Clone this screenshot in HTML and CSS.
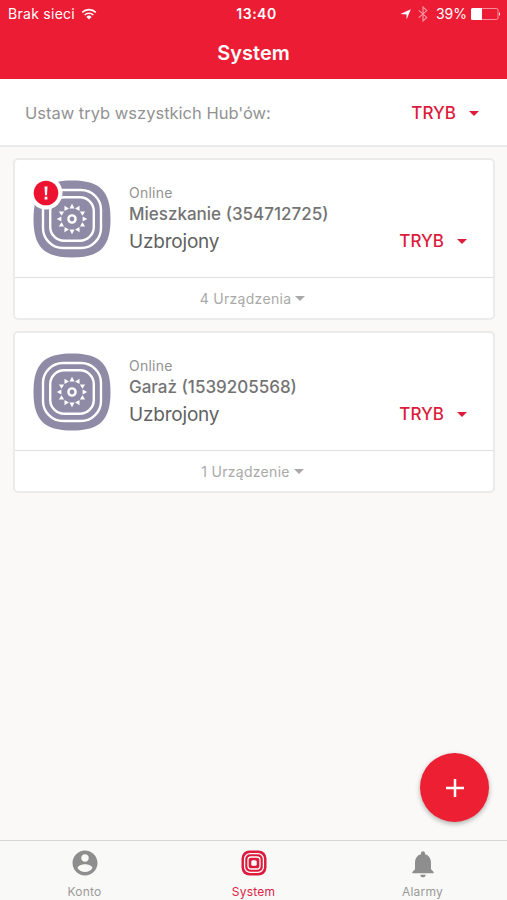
FILE: index.html
```html
<!DOCTYPE html>
<html lang="pl">
<head>
    <meta charset="UTF-8">
    <meta name="viewport" content="width=device-width, initial-scale=1">
    <title>System</title>
    <link rel="stylesheet" href="styles.css">
</head>
<body>
    <!-- hub icon, used by both cards -->
    <svg class="sprite" aria-hidden="true">
        <symbol id="hub" viewBox="-39 -39 78 78">
            <path fill="#8f8ba6" d="M0-38.5C28-38.5 38.5-28 38.5 0S28 38.5 0 38.5-38.5 28-38.5 0-28-38.5 0-38.5z"/>
            <rect x="-29" y="-29" width="58" height="58" rx="20" fill="none" stroke="#fff" stroke-width="2.4"/>
            <rect x="-21.8" y="-21.8" width="43.6" height="43.6" rx="14" fill="none" stroke="#fff" stroke-width="2.4"/>
            <circle r="3.6" fill="none" stroke="#fff" stroke-width="2.4"/>
            <g fill="#fff">
                <path id="ray" d="M0-15.2L2.5-10.6H-2.5z"/>
                <use href="#ray" transform="rotate(30)"/>
                <use href="#ray" transform="rotate(60)"/>
                <use href="#ray" transform="rotate(90)"/>
                <use href="#ray" transform="rotate(120)"/>
                <use href="#ray" transform="rotate(150)"/>
                <use href="#ray" transform="rotate(180)"/>
                <use href="#ray" transform="rotate(210)"/>
                <use href="#ray" transform="rotate(240)"/>
                <use href="#ray" transform="rotate(270)"/>
                <use href="#ray" transform="rotate(300)"/>
                <use href="#ray" transform="rotate(330)"/>
            </g>
        </symbol>
    </svg>

    <header class="header">
        <div class="status-bar">
            <div class="status-left">
                <span class="carrier">Brak sieci</span>
                <svg width="16" height="12" viewBox="0 0 16 12" fill="none" stroke="#fff" stroke-width="1.7">
                    <path d="M1.2 4.4a9.8 9.8 0 0 1 13.6 0M3.7 7a6.2 6.2 0 0 1 8.6 0"/>
                    <path d="M8 11.4L5.4 8.9a3.7 3.7 0 0 1 5.2 0z" fill="#fff" stroke="none"/>
                </svg>
            </div>
            <span class="clock">13:40</span>
            <div class="status-right">
                <svg class="location" width="11" height="11" viewBox="0 0 11 11"><path fill="#fff" d="M10.8.2L6.6 10.6V5.4L.4 5z"/></svg>
                <svg class="bluetooth" width="10" height="16" viewBox="0 0 10 16"><path fill="none" stroke="#fff" stroke-opacity=".55" stroke-width="1.1" d="M.8 4.4l8 7L5 15V1l3.8 3.6-8 7"/></svg>
                <span class="percent">39%</span>
                <svg class="battery" width="30" height="12" viewBox="0 0 30 12">
                    <rect x=".5" y=".5" width="26.5" height="11" rx="1.5" fill="none" stroke="#fff" stroke-opacity=".5"/>
                    <path fill="#fff" d="M1.5 0H11v12H1.5A1.5 1.5 0 0 1 0 10.5v-9A1.5 1.5 0 0 1 1.5 0zM28 4q2 2 0 4z"/>
                </svg>
            </div>
        </div>
        <h1>System</h1>
    </header>

    <section class="all-hubs">
        <span class="all-label">Ustaw tryb wszystkich Hub'ów:</span>
        <button class="mode">TRYB<i class="caret"></i></button>
    </section>

    <main class="hubs">
        <article class="card">
            <div class="card-body">
                <div class="hub-icon">
                    <svg width="78" height="78"><use href="#hub"/></svg>
                    <svg class="badge" width="34" height="34" viewBox="-17 -17 34 34">
                        <circle r="16.5" fill="#fff"/>
                        <circle r="12.3" fill="#ed1230"/>
                        <path fill="#fff" d="M-1.5-6.5h3L1 2.3h-2zM-1.4 3.8h2.8v2.6h-2.8z"/>
                    </svg>
                </div>
                <div class="info">
                    <div class="state">Online</div>
                    <div class="name">Mieszkanie (354712725)</div>
                    <div class="armed">Uzbrojony</div>
                </div>
                <button class="mode">TRYB<i class="caret"></i></button>
            </div>
            <div class="devices">4 Urządzenia<i class="caret"></i></div>
        </article>

        <article class="card">
            <div class="card-body">
                <div class="hub-icon">
                    <svg width="78" height="78"><use href="#hub"/></svg>
                </div>
                <div class="info">
                    <div class="state">Online</div>
                    <div class="name">Garaż (1539205568)</div>
                    <div class="armed">Uzbrojony</div>
                </div>
                <button class="mode">TRYB<i class="caret"></i></button>
            </div>
            <div class="devices">1 Urządzenie<i class="caret"></i></div>
        </article>
    </main>

    <button class="add" aria-label="Dodaj">
        <svg width="18" height="18" viewBox="0 0 18 18"><path d="M9 0v18M0 9h18" stroke="#fff" stroke-width="2.5"/></svg>
    </button>

    <nav class="tabs">
        <a class="tab">
            <svg width="30" height="30" viewBox="0 0 24 24"><path fill="#8e8e8e" d="M12 2C6.48 2 2 6.48 2 12s4.48 10 10 10 10-4.48 10-10S17.52 2 12 2zm0 3c1.66 0 3 1.34 3 3s-1.34 3-3 3-3-1.34-3-3 1.34-3 3-3zm0 14.2c-2.5 0-4.71-1.28-6-3.22.03-1.99 4-3.08 6-3.08 1.99 0 5.97 1.09 6 3.08-1.29 1.94-3.5 3.22-6 3.22z"/></svg>
            <span>Konto</span>
        </a>
        <a class="tab active">
            <svg width="30" height="30" viewBox="-15 -15 30 30">
                <rect x="-12.5" y="-12.5" width="25" height="25" rx="8" fill="#dc1c3c"/>
                <g fill="none" stroke="#fff" stroke-width="1.3">
                    <rect x="-9.4" y="-9.4" width="18.8" height="18.8" rx="5.5"/>
                    <rect x="-6" y="-6" width="12" height="12" rx="3"/>
                </g>
                <rect x="-2.7" y="-2.7" width="5.4" height="5.4" rx="1.5" fill="#fff"/>
            </svg>
            <span>System</span>
        </a>
        <a class="tab">
            <svg width="32" height="32" viewBox="0 0 24 24"><path fill="#8e8e8e" d="M12 22c1.1 0 2-.9 2-2h-4c0 1.1.89 2 2 2zm6-6v-5c0-3.07-1.64-5.64-4.5-6.32V4c0-.83-.67-1.5-1.5-1.5s-1.5.67-1.5 1.5v.68C7.63 5.36 6 7.92 6 11v5l-2 2v1h16v-1l-2-2z"/></svg>
            <span>Alarmy</span>
        </a>
    </nav>
</body>
</html>
```

FILE: styles.css
```css
* {
    box-sizing: border-box;
}
body {
    margin: 0;
    height: 900px;
    display: flex;
    flex-direction: column;
    position: relative;
    background: #faf9f7;
    font-family: Inter, "Liberation Sans", sans-serif;
    color: #616161;
    overflow: hidden;
}
button {
    border: none;
    background: none;
    padding: 0;
    font-family: inherit;
    cursor: pointer;
}
.sprite {
    position: absolute;
    width: 0;
    height: 0;
}

/* header */
.header {
    height: 79px;
    background: #ec1c35;
    color: #fff;
}
.status-bar {
    display: grid;
    grid-template-columns: 1fr auto 1fr;
    align-items: center;
    height: 28px;
    padding: 0 6px 0 8px;
    font-size: 14px;
    line-height: 28px;
}
.status-left,
.status-right {
    display: flex;
    align-items: center;
}
.status-left {
    gap: 6px;
}
.carrier {
    letter-spacing: 0.28px;
}
.clock {
    padding-left: 4px;
    font-weight: 600;
    letter-spacing: 0.5px;
}
.status-right {
    justify-content: flex-end;
}
.bluetooth {
    margin: 0 8px 0 7px;
}
.percent {
    margin-right: 4px;
}
h1 {
    margin: 0;
    text-align: center;
    font-size: 20px;
    font-weight: 600;
    line-height: 50px;
}

/* mode for all hubs */
.all-hubs {
    display: flex;
    align-items: center;
    justify-content: space-between;
    height: 68px;
    padding: 2px 28px 0 25px;
    background: #fff;
    border-bottom: 2px solid #ebeaea;
}
.all-label {
    font-size: 16.5px;
    color: #929292;
}
.mode {
    display: flex;
    align-items: center;
    gap: 13px;
    color: #dc1c3c;
    font-size: 17px;
    font-weight: 500;
    line-height: 20px;
}
.caret {
    border: 5px solid transparent;
    border-top-color: currentColor;
    border-bottom: none;
}

/* cards */
.hubs {
    flex: 1;
    display: flex;
    flex-direction: column;
    gap: 11px;
    padding: 11px 12px 0 13px;
}
.card {
    background: #fff;
    border: 2px solid #ebebeb;
    border-radius: 5px;
}
.card-body {
    display: flex;
    height: 117px;
    padding: 20px 26px 0 18px;
}
.hub-icon {
    position: relative;
    width: 78px;
    height: 78px;
    margin-right: 18px;
}
.badge {
    position: absolute;
    left: -4px;
    top: -4px;
}
.info {
    flex: 1;
    padding-top: 3px;
}
.state {
    font-size: 14px;
    line-height: 20px;
    letter-spacing: 0.25px;
    color: #929292;
}
.name {
    font-size: 17px;
    font-weight: 500;
    line-height: 22px;
    color: #737373;
}
.armed {
    font-size: 19px;
    line-height: 33px;
    letter-spacing: -0.2px;
}
.card-body .mode {
    align-self: flex-start;
    margin-top: 51px;
}
.devices {
    display: flex;
    align-items: center;
    justify-content: center;
    gap: 4px;
    height: 41px;
    padding-right: 3px;
    border-top: 1px solid #dfdfdf;
    font-size: 14px;
    letter-spacing: 0.3px;
    color: #a9a9a9;
}

.add {
    position: absolute;
    right: 18px;
    bottom: 78px;
    display: flex;
    align-items: center;
    justify-content: center;
    width: 69px;
    height: 69px;
    border-radius: 50%;
    background: #ed2033;
    box-shadow: 0 2px 5px rgba(0, 0, 0, 0.3);
}

/* bottom tabs */
.tabs {
    display: grid;
    grid-template-columns: repeat(3, 1fr);
    height: 60px;
    border-top: 1px solid #d6d5d4;
    background: #f9f9f8;
}
.tab {
    display: flex;
    flex-direction: column;
    align-items: center;
    justify-content: space-between;
    padding: 7px 0 1px;
    font-size: 12px;
    line-height: 15px;
    letter-spacing: 0.2px;
    color: #9a9a9a;
}
.active {
    color: #e02445;
}
```
